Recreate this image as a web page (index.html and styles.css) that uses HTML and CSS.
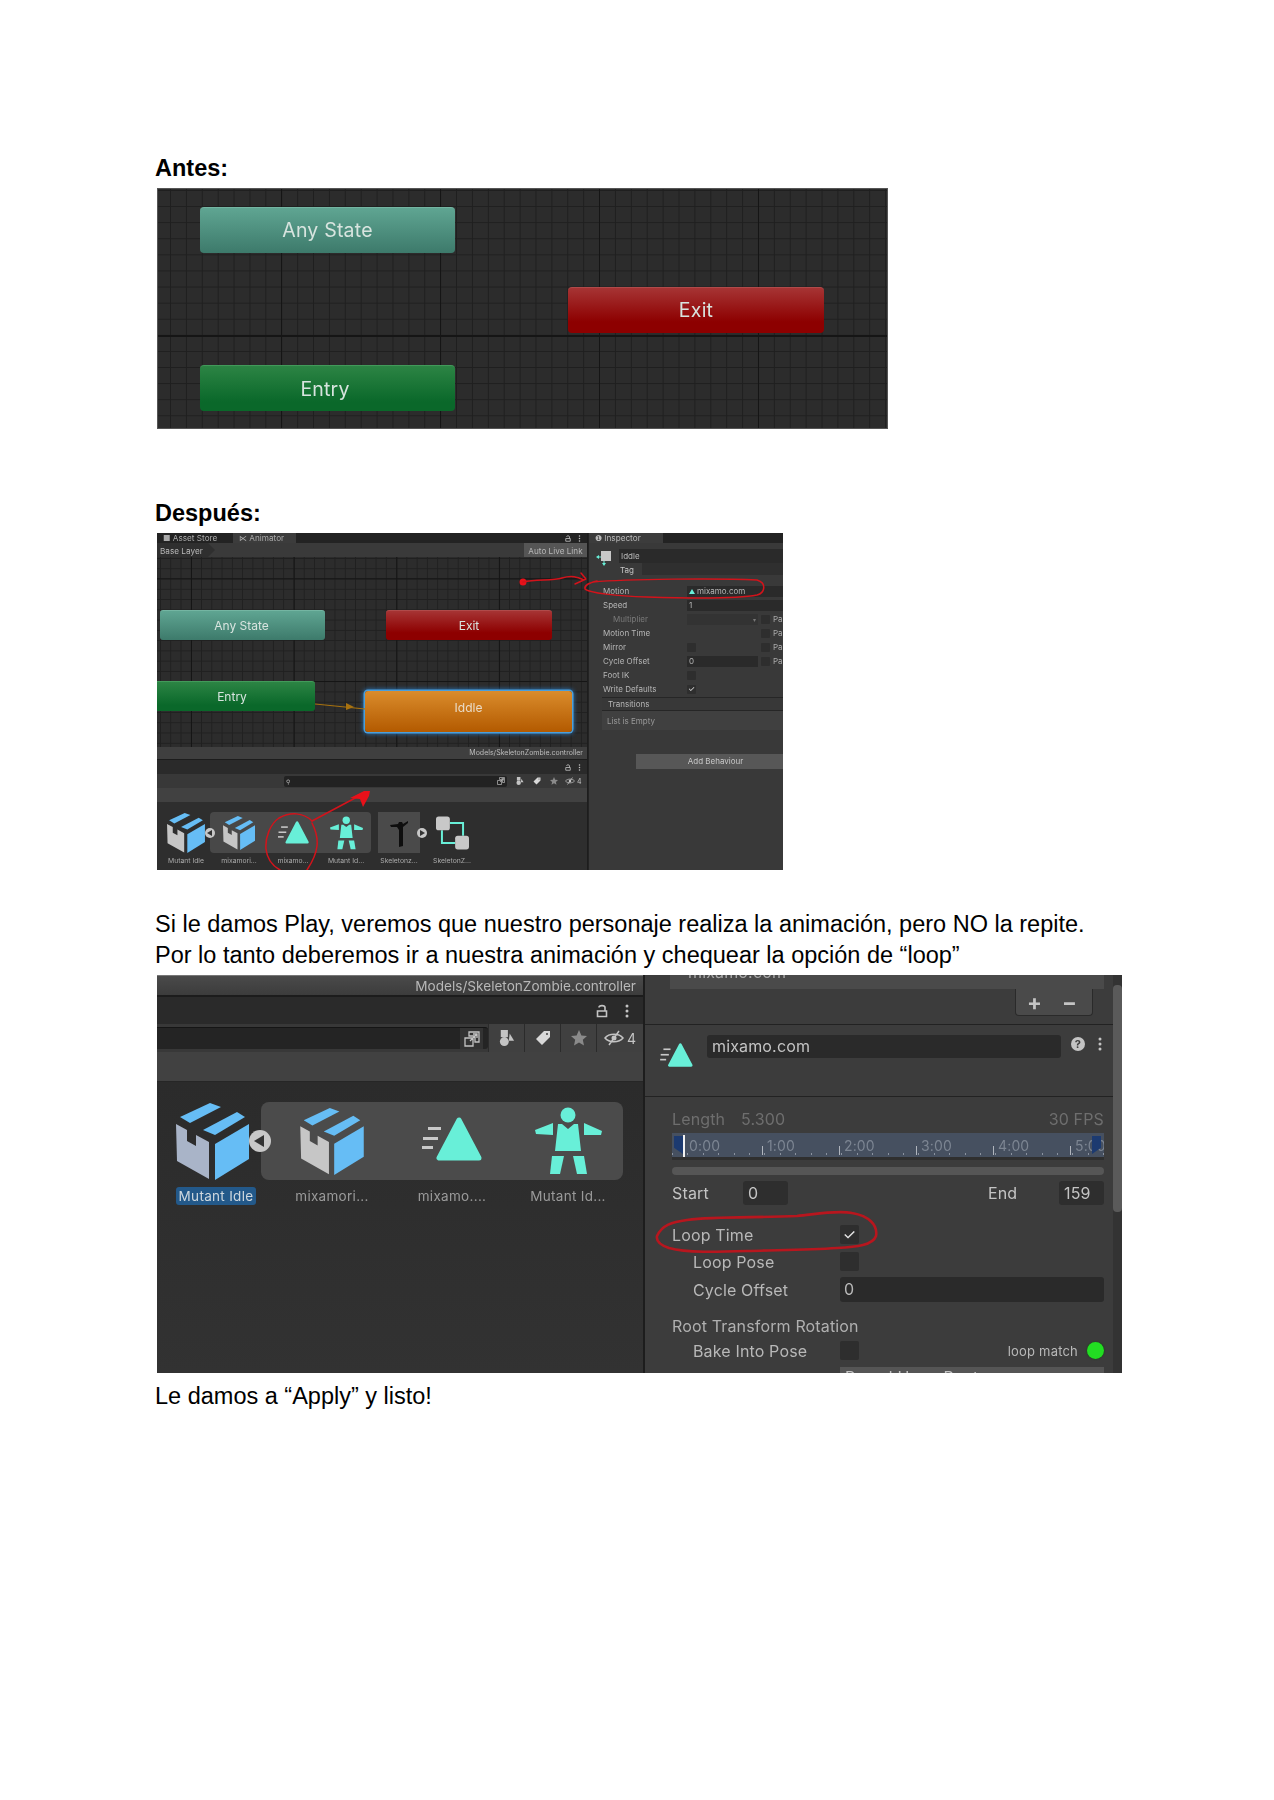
FILE: index.html
```html
<!DOCTYPE html>
<html lang="es">
<head>
    <meta charset="UTF-8">
    <meta name="viewport" content="width=device-width, initial-scale=1.0">
    <title>Animación en loop</title>
    <link rel="stylesheet" href="styles.css">
</head>
<body>
    <!-- iconos compartidos -->
    <svg class="icon-defs" width="0" height="0">
        <symbol id="i-box" viewBox="0 0 73 77">
            <polygon fill="#66bdf5" points="4,14 34,0 45,4 14,20"/>
            <polygon fill="#66bdf5" points="27,27 61,9 69,14 39,32"/>
            <polygon fill="var(--box-side, #c6c6c6)" points="0,21 11,27 11,38 20,43 20,32 33,39 33,76 1,58"/>
            <polygon fill="#66bdf5" points="39,41 73,21 73,56 39,77"/>
        </symbol>
        <symbol id="i-clip" viewBox="0 0 60 44">
            <rect fill="#c8c8c8" x="6" y="10" width="13" height="3"/>
            <rect fill="#c8c8c8" x="1" y="20" width="15" height="3"/>
            <rect fill="#c8c8c8" x="0" y="29" width="11" height="3"/>
            <polygon fill="#68efd8" stroke="#68efd8" stroke-width="5" stroke-linejoin="round" points="37,3 17,41 57,41"/>
        </symbol>
        <symbol id="i-avatar" viewBox="0 0 67 68">
            <g fill="#68efd8">
                <circle cx="33" cy="8" r="7.5"/>
                <polygon points="23,17 27,17 33,22 39,17 43,17 46,44 20,44"/>
                <polygon points="0,23 18,16 18,28 1,27"/>
                <polygon points="49,16 67,24 66,28 49,28"/>
                <polygon points="17,49 29,49 25,67 15,67"/>
                <polygon points="38,49 49,49 52,67 42,67"/>
            </g>
        </symbol>
        <symbol id="i-controller" viewBox="0 0 100 100">
            <path fill="none" stroke="#68efd8" stroke-width="6" d="M42 20H82V58M58 80H18V42"/>
            <rect fill="#c8c8c8" x="0" y="0" width="42" height="42" rx="8"/>
            <rect fill="#c8c8c8" x="58" y="58" width="42" height="42" rx="8"/>
        </symbol>
        <symbol id="i-lock" viewBox="0 0 12 14">
            <path fill="none" stroke="#c4c4c4" stroke-width="1.6" d="M9 7V3.5C9 1 3 1 3 3.5M1.5 7H10.5V12.5H1.5Z"/>
        </symbol>
        <symbol id="i-kebab" viewBox="0 0 4 14">
            <g fill="#c4c4c4"><circle cx="2" cy="2" r="1.5"/><circle cx="2" cy="7" r="1.5"/><circle cx="2" cy="12" r="1.5"/></g>
        </symbol>
        <symbol id="i-link" viewBox="0 0 16 16">
            <path fill="none" stroke="#c4c4c4" stroke-width="1.3" d="M5 1H15V11H11V5H5ZM1 7H9V15H1ZM6 10L13 3M9 3H13V7"/>
        </symbol>
        <symbol id="i-shapes" viewBox="0 0 16 18">
            <rect fill="#c4c4c4" x="1" y="0" width="8" height="8"/>
            <circle fill="#c4c4c4" cx="5" cy="13" r="5"/>
            <polygon fill="#c4c4c4" points="11,4 16,12 10,12"/>
        </symbol>
        <symbol id="i-tag" viewBox="0 0 16 16">
            <path fill="#d8d8d8" d="M9 1H15V7L7 15L1 9ZM12 3A1 1 0 1 0 12 5A1 1 0 1 0 12 3Z" fill-rule="evenodd"/>
        </symbol>
        <symbol id="i-star" viewBox="0 0 16 16">
            <polygon fill="#8a8a8a" points="8,0 10.4,5.4 16,6 11.8,9.8 13,15.5 8,12.6 3,15.5 4.2,9.8 0,6 5.6,5.4"/>
        </symbol>
        <symbol id="i-eye" viewBox="0 0 20 16">
            <path fill="none" stroke="#c4c4c4" stroke-width="1.5" d="M1 8C5 3 15 3 19 8C15 13 5 13 1 8ZM15 1L5 15"/>
            <circle fill="#c4c4c4" cx="10" cy="8" r="2.5"/>
        </symbol>
    </svg>

    <main class="doc">
        <h2 class="doc-title">Antes:</h2>
        <div class="shot shot-before graph graph-large">
            <div class="node node-any">Any State</div>
            <div class="node node-exit">Exit</div>
            <div class="node node-entry">Entry</div>
        </div>

        <h2 class="doc-title title-after">Después:</h2>
        <div class="shot shot-after">
            <div class="animator">
                <div class="tabs">
                    <span class="tab tab-dim">&#9632; Asset Store</span>
                    <span class="tab tab-active">&#8905; Animator</span>
                    <svg class="lock-sm"><use href="#i-lock"/></svg>
                    <svg class="kebab-sm"><use href="#i-kebab"/></svg>
                </div>
                <div class="crumbs">
                    <span class="crumb">Base Layer</span>
                    <span class="live-link">Auto Live Link</span>
                </div>
                <div class="graph graph-small">
                    <div class="node node-small n2-any">Any State</div>
                    <div class="node node-small n2-exit">Exit</div>
                    <div class="node node-small n2-entry">Entry</div>
                    <div class="node node-small n2-iddle">Iddle</div>
                    <svg class="transition" width="60" height="12" viewBox="0 0 60 12">
                        <path d="M0 3L50 8" stroke="#a8720f" stroke-width="1.2"/>
                        <polygon fill="#a8720f" points="31,2 39,6 31,9"/>
                    </svg>
                </div>
                <div class="path-bar">Models/SkeletonZombie.controller</div>
                <div class="lock-bar">
                    <svg class="lock-sm"><use href="#i-lock"/></svg>
                    <svg class="kebab-sm"><use href="#i-kebab"/></svg>
                </div>
                <div class="search-bar">
                    <div class="search-field"><span class="search-glass">&#9906;</span><svg class="tool-sm"><use href="#i-link"/></svg></div>
                    <svg class="tool-sm"><use href="#i-shapes"/></svg>
                    <svg class="tool-sm"><use href="#i-tag"/></svg>
                    <svg class="tool-sm"><use href="#i-star"/></svg>
                    <svg class="tool-eye"><use href="#i-eye"/></svg>
                    <span class="tool-count">4</span>
                </div>
                <div class="grey-bar"></div>
                <div class="assets">
                    <div class="asset-group"></div>
                    <svg class="a-icon a-first" width="38" height="40"><use href="#i-box"/></svg>
                    <span class="fold-btn fold-left"></span>
                    <svg class="a-icon a-c2" width="32" height="34"><use href="#i-box"/></svg>
                    <svg class="a-icon a-c3" width="31" height="23"><use href="#i-clip"/></svg>
                    <svg class="a-icon a-c4" width="33" height="34"><use href="#i-avatar"/></svg>
                    <div class="a-thumb a-c5">
                        <svg width="20" height="30" viewBox="0 0 20 30">
                            <path fill="#0e0e0e" d="M1 7L9 6L10 4L13 4L14 6L19 3L19 5L14 9L14 28L10 29L10 12L8 9L2 9Z"/>
                        </svg>
                    </div>
                    <span class="fold-btn fold-right"></span>
                    <svg class="a-icon a-c6" width="33" height="34"><use href="#i-controller"/></svg>
                    <span class="a-label a-first">Mutant Idle</span>
                    <span class="a-label a-c2">mixamori...</span>
                    <span class="a-label a-c3">mixamo...</span>
                    <span class="a-label a-c4">Mutant Id...</span>
                    <span class="a-label a-c5">Skeletonz...</span>
                    <span class="a-label a-c6">SkeletonZ...</span>
                </div>
            </div>
            <div class="inspector">
                <div class="tabs">
                    <span class="tab tab-active tab-inspector">&#10102; Inspector</span>
                </div>
                <div class="ins-head">
                    <svg class="state-icon" width="16" height="15" viewBox="0 0 16 15">
                        <rect fill="#c8c8c8" x="5" y="0" width="10" height="10"/>
                        <path fill="#68efd8" d="M0 6L3 4V5.5H5V6.5H3V8ZM8 15L6 12H7.5V10H8.5V12H10Z"/>
                    </svg>
                    <div class="ins-names">
                        <div class="ins-name">Iddle</div>
                        <div class="ins-tag"><span>Tag</span><i></i></div>
                    </div>
                </div>
                <div class="ins-rows">
                    <div class="ins-row"><span>Motion</span><span class="field field-motion"><b class="tri"></b>mixamo.com</span></div>
                    <div class="ins-row"><span>Speed</span><span class="field field-wide">1</span></div>
                    <div class="ins-row"><span class="sub">Multiplier</span><span class="field field-mid field-drop">&#9662;</span><span class="check"></span><span class="pa">Pa</span></div>
                    <div class="ins-row"><span>Motion Time</span><span class="field-gap"></span><span class="check"></span><span class="pa">Pa</span></div>
                    <div class="ins-row"><span>Mirror</span><span class="field-gap"><span class="check"></span></span><span class="check"></span><span class="pa">Pa</span></div>
                    <div class="ins-row"><span>Cycle Offset</span><span class="field field-mid">0</span><span class="check"></span><span class="pa">Pa</span></div>
                    <div class="ins-row"><span>Foot IK</span><span class="field-gap"><span class="check"></span></span></div>
                    <div class="ins-row"><span>Write Defaults</span><span class="field-gap"><span class="check check-on">&#10003;</span></span></div>
                </div>
                <div class="transitions">
                    <div class="trans-head">Transitions</div>
                    <div class="trans-body">List is Empty</div>
                </div>
                <div class="add-behaviour">Add Behaviour</div>
            </div>
            <svg class="ink" viewBox="0 0 626 337">
                <circle class="ink-dot" cx="366" cy="49" r="3.5"/>
                <path class="ink-line" d="M366 49C380 46 395 48 405 45S420 44 427 47M418 51L429 46L424 40"/>
                <path class="ink-line" d="M436 49C470 46 560 45 600 47C610 50 608 60 600 62C580 66 523 65 490 64C460 63 432 60 428 56C427 52 432 50 440 48"/>
                <path class="ink-line" d="M155 288C146 279 133 279 122 285C113 291 108 305 109 316C110 326 116 333 123 337M155 290C158 296 161 305 160 313C159 322 154 331 150 337"/>
                <path class="ink-line" d="M155 288L200 264"/>
                <polygon class="ink-dot" points="193,265 207,258 213,258 212,263 206,274 203,266"/>
            </svg>
        </div>

        <p class="doc-text text-play">Si le damos Play, veremos que nuestro personaje realiza la animación, pero NO la repite.<br>Por lo tanto deberemos ir a nuestra animación y chequear la opción de “loop”</p>

        <div class="shot shot-clip">
            <div class="project">
                <div class="p-path">Models/SkeletonZombie.controller</div>
                <div class="p-lockbar">
                    <svg class="p-lock"><use href="#i-lock"/></svg>
                    <svg class="p-kebab"><use href="#i-kebab"/></svg>
                </div>
                <div class="p-search">
                    <div class="p-field"><span class="p-field-btn"><svg class="p-tool"><use href="#i-link"/></svg></span></div>
                    <span class="p-btn"><svg class="p-tool"><use href="#i-shapes"/></svg></span>
                    <span class="p-btn"><svg class="p-tool"><use href="#i-tag"/></svg></span>
                    <span class="p-btn"><svg class="p-tool"><use href="#i-star"/></svg></span>
                    <span class="p-btn p-btn-eye"><svg class="p-eye"><use href="#i-eye"/></svg>4</span>
                </div>
                <div class="p-grey"></div>
                <div class="p-assets">
                    <div class="p-group"></div>
                    <svg class="p-icon p-first p-selected" width="73" height="77"><use href="#i-box"/></svg>
                    <span class="p-fold"></span>
                    <svg class="p-icon p-c2" width="64" height="67"><use href="#i-box"/></svg>
                    <svg class="p-icon p-c3" width="60" height="44"><use href="#i-clip"/></svg>
                    <svg class="p-icon p-c4" width="67" height="68"><use href="#i-avatar"/></svg>
                    <span class="p-label p-first p-label-on">Mutant Idle</span>
                    <span class="p-label p-c2">mixamori...</span>
                    <span class="p-label p-c3">mixamo....</span>
                    <span class="p-label p-c4">Mutant Id...</span>
                </div>
            </div>
            <div class="clip-panel">
                <div class="clip-body">
                    <div class="clip-list"><span>mixamo.com</span></div>
                    <div class="clip-plus"><span>+</span><span>&minus;</span></div>
                    <div class="clip-head">
                        <svg class="clip-icon" width="33" height="24"><use href="#i-clip"/></svg>
                        <div class="clip-name">mixamo.com</div>
                        <span class="clip-help">?</span>
                        <svg class="clip-kebab"><use href="#i-kebab"/></svg>
                    </div>
                    <div class="clip-form">
                        <div class="len-row"><span class="len-label">Length</span><span>5.300</span><span class="len-fps">30 FPS</span></div>
                        <div class="timeline">
                            <span class="tl-flag"></span>
                            <span class="tl-head"></span>
                            <span class="tl-cell tl-cell-first">0:00</span>
                            <span class="tl-cell">1:00</span>
                            <span class="tl-cell">2:00</span>
                            <span class="tl-cell">3:00</span>
                            <span class="tl-cell">4:00</span>
                            <span class="tl-cell">5:00</span>
                            <span class="tl-flag tl-flag-end"></span>
                        </div>
                        <div class="tl-scroll"></div>
                        <div class="range-row">
                            <span class="range-label">Start</span>
                            <span class="range-field">0</span>
                            <span class="range-end">End</span>
                            <span class="range-field">159</span>
                        </div>
                        <div class="opt-row opt-loop"><span>Loop Time</span><span class="opt-check">&#10003;</span></div>
                        <div class="opt-row opt-pose"><span class="opt-sub">Loop Pose</span><span class="opt-check"></span></div>
                        <div class="opt-row opt-cycle"><span class="opt-sub">Cycle Offset</span><span class="opt-field">0</span></div>
                        <div class="opt-title">Root Transform Rotation</div>
                        <div class="opt-row opt-bake">
                            <span class="opt-sub">Bake Into Pose</span><span class="opt-check"></span>
                            <span class="opt-match">loop match</span><span class="opt-led"></span>
                        </div>
                        <div class="opt-clipped"><span>Based Upon Root</span></div>
                    </div>
                </div>
                <div class="clip-scroll"><span></span></div>
            </div>
            <svg class="ink" viewBox="0 0 965 398">
                <path class="ink-line ink-bold" d="M500 261C505 250 515 247 530 245C560 241 600 243 640 241C660 239 680 235 695 238C712 241 721 250 719 261C716 270 700 272 680 273C650 275 620 275 590 276C560 277 530 278 512 273C503 270 499 266 500 261Z"/>
            </svg>
        </div>

        <p class="doc-text text-end">Le damos a “Apply” y listo!</p>
    </main>
</body>
</html>
```

FILE: styles.css
```css
body {
    margin: 0;
    background-color: #fff;
    color: #000;
    font-family: 'Liberation Sans', Arial, sans-serif;
}

.icon-defs {
    position: absolute;
}

.doc {
    padding: 153px 0 380px 155px;
}

.doc-title {
    margin: 0 0 4px;
    font-size: 23.5px;
    line-height: 31px;
    font-weight: bold;
}

.title-after {
    margin-top: 69px;
}

.doc-text {
    margin: 0;
    font-size: 23.5px;
    line-height: 31px;
}

.text-play {
    margin-top: 39px;
    margin-bottom: 4px;
}

.text-end {
    margin-top: 8px;
}

/* capturas */
.shot {
    position: relative;
    margin-left: 2px;
    overflow: hidden;
    font-family: Inter, 'Liberation Sans', sans-serif;
    filter: blur(0.4px);
}

.shot-before {
    width: 731px;
    height: 241px;
}

.shot-after {
    display: grid;
    grid-template-columns: 431px 195px;
    width: 626px;
    height: 337px;
    background-color: #383838;
    color: #c4c4c4;
    font-size: 8px;
}

.shot-clip {
    display: grid;
    grid-template-columns: 486px 479px;
    width: 965px;
    height: 398px;
    background-color: #1d1d1d;
    color: #c4c4c4;
}

.graph {
    position: relative;
    background-color: #2c2c2c;
}

.graph-large {
    background-image:
        linear-gradient(90deg, #151515 1px, transparent 1px),
        linear-gradient(#151515 2px, transparent 2px),
        linear-gradient(90deg, #1f1f1f 1px, transparent 1px),
        linear-gradient(#1f1f1f 1px, transparent 1px);
    background-size: 159px 100%, 100% 161px, 15.9px 100%, 100% 16.1px;
    background-position: 123px 0, 0 146px, 12px 0, 0 1px;
    border: 1px solid #555;
    box-sizing: border-box;
}

.graph-small {
    flex: none;
    height: 190px;
    background-image:
        linear-gradient(90deg, #151515 1px, transparent 1px),
        linear-gradient(#151515 1px, transparent 1px),
        linear-gradient(90deg, #202020 1px, transparent 1px),
        linear-gradient(#202020 1px, transparent 1px);
    background-size: 102.7px 100%, 100% 102.7px, 10.27px 100%, 100% 10.27px;
    background-position: 34px 0, 0 124px, 3px 0, 0 1px;
}

.node {
    position: absolute;
    display: flex;
    align-items: center;
    justify-content: center;
    box-sizing: border-box;
    width: 255px;
    height: 46px;
    border-radius: 4px;
    font-size: 19.5px;
    letter-spacing: 0.2px;
    color: #d8e4df;
}

.node-any,
.n2-any {
    background: linear-gradient(#5fa592, #3d7a6b);
    border-top: 1px solid #74b5a2;
}

.node-exit,
.n2-exit {
    background: linear-gradient(#a63434, #8d0000 75%);
    border-top: 1px solid #b04a4a;
}

.node-entry,
.n2-entry {
    background: linear-gradient(#2c8444, #0a682a 80%);
    border-top: 1px solid #429a5a;
}

.node-any {
    left: 42px;
    top: 18px;
    padding-bottom: 2px;
}

.node-exit {
    left: 410px;
    top: 98px;
    width: 256px;
    padding-bottom: 2px;
}

.node-entry {
    left: 42px;
    top: 176px;
    padding-right: 5px;
}

.node-small {
    font-size: 12px;
    letter-spacing: 0;
    height: 30px;
    border-radius: 3px;
}

.n2-any {
    left: 3px;
    top: 53px;
    width: 165px;
    padding-right: 2px;
}

.n2-exit {
    left: 229px;
    top: 53px;
    width: 166px;
}

.n2-entry {
    left: 0;
    top: 124px;
    width: 158px;
    padding: 0 8px 0 0;
    border-radius: 0 3px 3px 0;
}

.n2-iddle {
    left: 208px;
    top: 134px;
    width: 207px;
    height: 41px;
    padding-bottom: 8px;
    background: linear-gradient(#da8c2c, #b35a00);
    box-shadow: 0 0 0 1.5px #4b9fdc, 0 0 4px 2px #2a6ca8;
    color: #eadcc8;
}

.transition {
    position: absolute;
    left: 158px;
    top: 144px;
}

/* animator */
.animator {
    display: flex;
    flex-direction: column;
    height: 337px;
    border-right: 1px solid #1d1d1d;
    box-sizing: border-box;
}

.tabs {
    display: flex;
    align-items: center;
    flex: none;
    height: 10px;
    background-color: #232323;
    font-size: 8.2px;
    overflow: hidden;
}

.tab {
    display: flex;
    align-items: center;
    height: 100%;
    padding-left: 6px;
    box-sizing: border-box;
    white-space: nowrap;
}

.tab-dim {
    width: 76px;
    color: #aaa;
}

.tab-active {
    width: 63px;
    background-color: #3c3c3c;
    color: #aaa;
}

.tab-inspector {
    width: 74px;
    padding-left: 6px;
    color: #bbb;
}

.lock-sm {
    width: 6px;
    height: 7px;
    margin-left: auto;
}

.kebab-sm {
    width: 3px;
    height: 7px;
    margin: 0 6px 0 7px;
}

.crumbs {
    display: flex;
    justify-content: space-between;
    flex: none;
    height: 14px;
    line-height: 16px;
    background-color: #3a3a3a;
    color: #b8b8b8;
    font-size: 8.2px;
}

.crumb {
    width: 55px;
    padding-left: 3px;
    background-color: #2f2f2f;
    clip-path: polygon(0 0, 88% 0, 100% 50%, 88% 100%, 0 100%);
}

.live-link {
    width: 63px;
    text-align: center;
    background-color: #555;
}

.path-bar {
    flex: none;
    height: 12px;
    padding-right: 4px;
    line-height: 12px;
    text-align: right;
    background-color: #3f3f3f;
    font-size: 7px;
    color: #bdbdbd;
}

.lock-bar {
    display: flex;
    align-items: center;
    flex: none;
    height: 15px;
    background-color: #2a2a2a;
    border-top: 1px solid #1c1c1c;
    box-sizing: border-box;
}

.search-bar {
    display: flex;
    align-items: center;
    flex: none;
    height: 14px;
    padding-left: 127px;
    background-color: #383838;
}

.search-field {
    display: flex;
    align-items: center;
    justify-content: space-between;
    width: 223px;
    height: 11px;
    padding: 0 2px;
    box-sizing: border-box;
    background-color: #222;
    border-radius: 2px;
}

.search-glass {
    font-size: 6px;
    color: #bbb;
}

.tool-sm {
    flex: none;
    width: 8px;
    height: 8px;
    margin-left: 9px;
}

.tool-eye {
    width: 10px;
    height: 8px;
    margin-left: 7px;
}

.tool-count {
    margin-left: 2px;
    font-size: 7px;
}

.grey-bar {
    flex: none;
    height: 14px;
    background-color: #414141;
}

.assets {
    display: grid;
    grid-template-columns: 53px 58px 50px 56px 50px 56px;
    grid-template-rows: 41px 1fr;
    flex: 1;
    padding-top: 10px;
    row-gap: 2px;
    background-color: #2e2e2e;
    overflow: hidden;
}

.asset-group {
    grid-column: 2 / 5;
    grid-row: 1;
    margin-right: 3px;
    background-color: #484848;
    border-radius: 4px;
}

.a-icon {
    grid-row: 1;
    align-self: center;
    justify-self: center;
}

.a-first {
    grid-column: 1;
    justify-self: center;
    margin-left: 5px;
}

.a-c2 { grid-column: 2; }
.a-c3 { grid-column: 3; }
.a-c4 { grid-column: 4; }
.a-c5 { grid-column: 5; }
.a-c6 { grid-column: 6; }

.a-thumb {
    display: flex;
    align-items: center;
    justify-content: center;
    grid-row: 1;
    justify-self: center;
    width: 42px;
    background-color: #4a4a4a;
}

.fold-btn {
    grid-row: 1;
    align-self: center;
    position: relative;
    width: 10px;
    height: 10px;
    border-radius: 50%;
    background-color: #c8c8c8;
    z-index: 1;
}

.fold-left {
    grid-column: 1;
    justify-self: end;
    margin-right: -5px;
}

.fold-right {
    grid-column: 5;
    justify-self: end;
    margin-right: -3px;
}

.fold-left::after,
.fold-right::after {
    content: "";
    position: absolute;
    top: 2px;
    border-top: 3px solid transparent;
    border-bottom: 3px solid transparent;
}

.fold-left::after {
    left: 2px;
    border-right: 5px solid #333;
}

.fold-right::after {
    left: 3px;
    border-left: 5px solid #333;
}

.a-label {
    grid-row: 2;
    justify-self: center;
    font-size: 6.8px;
    line-height: 12px;
    color: #aaa;
    white-space: nowrap;
}

/* inspector */
.inspector {
    display: flex;
    flex-direction: column;
    background-color: #393939;
    box-shadow: inset 1px 0 0 #232323;
    padding-left: 1px;
    box-sizing: border-box;
    overflow: hidden;
}

.ins-head {
    display: flex;
    flex: none;
    gap: 7px;
    height: 41px;
    padding: 6px 0 0 7px;
    box-sizing: border-box;
}

.state-icon {
    flex: none;
    margin-top: 2px;
}

.ins-names {
    flex: 1;
}

.ins-name {
    height: 14px;
    padding-left: 2px;
    line-height: 14px;
    background-color: #2a2a2a;
    color: #bbb;
}

.ins-tag {
    display: flex;
    height: 12px;
    margin-top: 0;
    line-height: 14px;
}

.ins-tag span {
    width: 22px;
    padding-left: 1px;
}

.ins-tag i {
    flex: 1;
    background-color: #2f2f2f;
}

.ins-rows {
    flex: none;
    padding: 0 0 0 14px;
    margin-top: 0;
}

.ins-row {
    display: flex;
    align-items: center;
    height: 14px;
    white-space: nowrap;
    color: #b6b6b6;
}

.ins-row > span:first-child {
    flex: none;
    width: 84px;
}

.ins-row > .sub {
    padding-left: 10px;
    box-sizing: border-box;
    color: #7a7a7a;
}

.field {
    display: flex;
    align-items: center;
    height: 11px;
    padding-left: 2px;
    box-sizing: border-box;
    background-color: #2a2a2a;
}

.field-motion,
.field-wide {
    flex: 1;
}

.field-mid {
    width: 71px;
    margin-right: 3px;
}

.field-drop {
    justify-content: flex-end;
    padding-right: 2px;
    font-size: 6px;
    color: #777;
    background-color: #333;
}

.field-gap {
    width: 74px;
    flex: none;
}

.tri {
    width: 0;
    height: 0;
    margin-right: 2px;
    border-left: 3px solid transparent;
    border-right: 3px solid transparent;
    border-bottom: 5px solid #68efd8;
}

.check {
    display: flex;
    align-items: center;
    justify-content: center;
    width: 9px;
    height: 9px;
    background-color: #2e2e2e;
    border-radius: 1px;
    color: #ddd;
    font-size: 8px;
}

.pa {
    margin-left: 3px;
    color: #aaa;
}

.transitions {
    flex: none;
    margin: 1px 0 0 13px;
    background-color: #404040;
    border-top: 1px solid #262626;
}

.trans-head {
    height: 12px;
    padding-left: 6px;
    line-height: 12px;
    background-color: #383838;
    border-bottom: 1px solid #262626;
    color: #b6b6b6;
}

.trans-body {
    height: 19px;
    padding-left: 5px;
    line-height: 21px;
    color: #9a9a9a;
}

.add-behaviour {
    flex: none;
    height: 15px;
    margin: 24px 0 0 47px;
    padding-left: 12px;
    line-height: 15px;
    text-align: center;
    background-color: #575757;
    color: #c8c8c8;
}

/* anotaciones en rojo */
.ink {
    position: absolute;
    left: 0;
    top: 0;
    width: 100%;
    height: 100%;
    pointer-events: none;
}

.ink-line {
    fill: none;
    stroke: #d3131b;
    stroke-width: 1.5;
    stroke-linejoin: round;
    stroke-linecap: round;
}

.ink-bold {
    stroke: #b8161e;
    stroke-width: 2.6;
}

.ink-dot {
    fill: #e8111a;
}

/* panel project grande */
.project {
    display: flex;
    flex-direction: column;
    height: 398px;
}

.p-path {
    flex: none;
    height: 20px;
    padding-right: 7px;
    line-height: 20px;
    text-align: right;
    background: linear-gradient(#4a4a4a, #3c3c3c);
    border-top: 1px solid #777;
    box-sizing: border-box;
    font-size: 13.6px;
    color: #b8b8b8;
}

.p-lockbar {
    display: flex;
    align-items: center;
    justify-content: flex-end;
    flex: none;
    height: 29px;
    margin-top: 0;
    padding-right: 14px;
    gap: 17px;
    box-sizing: border-box;
    background-color: #2a2a2a;
    border-top: 2px solid #1c1c1c;
}

.p-lock {
    width: 12px;
    height: 14px;
}

.p-kebab {
    width: 4px;
    height: 14px;
}

.p-search {
    display: flex;
    align-items: center;
    flex: none;
    height: 28px;
    background-color: #383838;
}

.p-field {
    display: flex;
    justify-content: flex-end;
    width: 331px;
    height: 22px;
    padding-right: 5px;
    box-sizing: border-box;
    background-color: #242424;
    border-top: 1px solid #151515;
    border-radius: 0 3px 3px 0;
}

.p-field-btn {
    display: flex;
    align-items: center;
    justify-content: center;
    width: 23px;
    background-color: #333;
}

.p-btn {
    display: flex;
    align-items: center;
    justify-content: center;
    width: 36px;
    height: 100%;
    box-sizing: border-box;
    border-left: 1px solid #2b2b2b;
    background-color: #404040;
}

.p-btn-eye {
    flex: 1;
    gap: 3px;
    font-size: 14px;
}

.p-tool {
    width: 16px;
    height: 16px;
}

.p-eye {
    width: 20px;
    height: 16px;
}

.p-grey {
    flex: none;
    height: 29px;
    background-color: #414141;
}

.p-assets {
    display: grid;
    grid-template-columns: 104px 142px 98px 134px;
    grid-template-rows: 78px 1fr;
    flex: 1;
    padding-top: 20px;
    row-gap: 7px;
    background: linear-gradient(#2b2b2b, #323232);
    border-top: 1px solid #262626;
    box-sizing: border-box;
}

.p-group {
    grid-column: 2 / 5;
    grid-row: 1;
    margin-right: 12px;
    background-color: #4b4b4b;
    border-radius: 8px;
}

.p-icon {
    grid-row: 1;
    align-self: center;
    justify-self: center;
}

.p-first {
    grid-column: 1;
}

.p-icon.p-first {
    margin-left: 6px;
}

.p-selected {
    --box-side: #a9b4c8;
}

.p-c2 { grid-column: 2; }
.p-c3 { grid-column: 3; }
.p-c4 { grid-column: 4; }

.p-icon.p-c3 {
    margin-top: -4px;
}

.p-fold {
    position: relative;
    grid-column: 1;
    grid-row: 1;
    align-self: center;
    justify-self: end;
    width: 22px;
    height: 22px;
    margin-right: -10px;
    border-radius: 50%;
    background-color: #c8c8c8;
    z-index: 1;
}

.p-fold::after {
    content: "";
    position: absolute;
    left: 5px;
    top: 5px;
    border-top: 6px solid transparent;
    border-bottom: 6px solid transparent;
    border-right: 10px solid #333;
}

.p-label {
    grid-row: 2;
    justify-self: center;
    align-self: start;
    height: 18px;
    line-height: 18px;
    font-size: 13.5px;
    letter-spacing: 0.3px;
    color: #9a9a9a;
    white-space: nowrap;
}

.p-label-on {
    margin-left: 14px;
    padding: 0 3px;
    border-radius: 3px;
    background-color: #23598a;
    color: #cfd8df;
}

/* panel del clip */
.clip-panel {
    display: grid;
    grid-template-columns: 1fr 9px;
    margin-left: 2px;
    background-color: #3c3c3c;
    font-size: 16px;
    letter-spacing: 0.15px;
}

.clip-body {
    display: flex;
    flex-direction: column;
    min-width: 0;
}

.clip-list {
    flex: none;
    height: 14px;
    margin: 0 9px 0 25px;
    padding-left: 18px;
    background-color: #4a4a4a;
    overflow: hidden;
}

.clip-list span {
    display: block;
    margin-top: -13px;
    line-height: 20px;
    color: #a8a8a8;
}

.clip-plus {
    display: flex;
    align-items: center;
    flex: none;
    gap: 20px;
    align-self: flex-end;
    width: 78px;
    height: 27px;
    margin-right: 20px;
    padding-left: 11px;
    box-sizing: border-box;
    background-color: #4a4a4a;
    border-radius: 0 0 4px 4px;
    border: 1px solid #2a2a2a;
    border-top: 0;
    font-size: 22px;
    font-weight: bold;
}

.clip-head {
    display: flex;
    align-items: flex-start;
    flex: none;
    height: 73px;
    margin-top: 8px;
    padding: 10px 9px 0 15px;
    box-sizing: border-box;
    border-top: 1px solid #222;
    border-bottom: 1px solid #222;
}

.clip-icon {
    flex: none;
    margin-top: 8px;
}

.clip-name {
    width: 354px;
    height: 23px;
    margin-left: 14px;
    padding-left: 5px;
    box-sizing: border-box;
    line-height: 23px;
    background-color: #2a2a2a;
    border-radius: 3px;
    color: #c4c4c4;
}

.clip-help {
    width: 14px;
    height: 14px;
    margin: 2px 0 0 10px;
    line-height: 14px;
    text-align: center;
    border-radius: 50%;
    background-color: #c4c4c4;
    color: #3c3c3c;
    font-size: 11px;
    font-weight: bold;
}

.clip-kebab {
    width: 4px;
    height: 14px;
    margin: 2px 0 0 13px;
}

.clip-form {
    display: flex;
    flex-direction: column;
    flex: 1;
    padding: 0 9px 0 27px;
    overflow: hidden;
}

.len-row {
    display: flex;
    flex: none;
    height: 22px;
    margin-top: 11px;
    line-height: 22px;
    color: #6e6e6e;
}

.len-label {
    width: 69px;
}

.len-fps {
    margin-left: auto;
}

.timeline {
    position: relative;
    display: flex;
    flex: none;
    height: 27px;
    margin-top: 3px;
    padding-left: 13px;
    box-sizing: border-box;
    background-color: #465060;
    background-image: repeating-linear-gradient(90deg, #8b93a0 0 1px, transparent 1px 15.4px);
    background-size: 100% 2px;
    background-repeat: no-repeat;
    background-position: 0 20px;
    border-bottom: 3px solid #2f2f2f;
    overflow: hidden;
    font-size: 14px;
    color: #7c8592;
}

.tl-cell {
    flex: none;
    width: 77px;
    height: 22px;
    padding-left: 4px;
    box-sizing: border-box;
    line-height: 26px;
    border-left: 1px solid #b0b5bd;
    border-image: linear-gradient(transparent 60%, #b0b5bd 60%) 1;
}

.tl-cell-first {
    border-left: 0;
}

.tl-head {
    position: absolute;
    left: 11px;
    top: 2px;
    width: 2px;
    height: 22px;
    background-color: #f2f2f2;
}

.tl-flag {
    position: absolute;
    left: 2px;
    top: 3px;
    width: 9px;
    height: 18px;
    background-color: #1c3a70;
    clip-path: polygon(0 0, 100% 0, 100% 100%, 0 65%);
}

.tl-flag-end {
    left: auto;
    right: 3px;
    clip-path: polygon(0 0, 100% 0, 100% 65%, 0 100%);
}

.tl-scroll {
    flex: none;
    height: 8px;
    margin-top: 7px;
    background-color: #565656;
    border-radius: 4px;
}

.range-row {
    display: flex;
    align-items: center;
    flex: none;
    height: 24px;
    margin-top: 6px;
}

.range-label {
    width: 71px;
}

.range-end {
    margin: 0 0 0 auto;
    width: 71px;
}

.range-field {
    width: 45px;
    height: 24px;
    padding-left: 5px;
    box-sizing: border-box;
    line-height: 24px;
    background-color: #2e2e2e;
    border-radius: 3px;
}

.opt-row {
    display: flex;
    align-items: center;
    flex: none;
    height: 19px;
    color: #b8b8b8;
}

.opt-row > span:first-child {
    flex: none;
    width: 168px;
}

.opt-row > .opt-sub {
    padding-left: 21px;
    box-sizing: border-box;
}

.opt-loop {
    margin-top: 20px;
}

.opt-pose {
    margin-top: 8px;
}

.opt-cycle {
    height: 25px;
    margin-top: 6px;
}

.opt-bake {
    margin-top: 4px;
}

.opt-check {
    display: flex;
    align-items: center;
    justify-content: center;
    width: 19px;
    height: 19px;
    border-radius: 2px;
    background-color: #2e2e2e;
    font-size: 15px;
    color: #e8e8e8;
}

.opt-field {
    flex: 1;
    height: 25px;
    padding-left: 4px;
    line-height: 25px;
    background-color: #2a2a2a;
    border-radius: 3px;
}

.opt-title {
    flex: none;
    height: 22px;
    margin-top: 13px;
    line-height: 22px;
    color: #b0b0b0;
}

.opt-match {
    margin-left: auto;
    font-size: 13px;
    letter-spacing: 0.2px;
}

.opt-led {
    width: 17px;
    height: 17px;
    margin-left: 9px;
    border-radius: 50%;
    background-color: #22dd22;
    box-shadow: 0 0 2px #0a4a0a;
}

.opt-clipped {
    flex: none;
    height: 10px;
    margin: 7px 0 0 168px;
    padding-left: 5px;
    background-color: #555;
    overflow: hidden;
}

.opt-clipped span {
    display: block;
    line-height: 20px;
    white-space: nowrap;
}

.clip-scroll {
    background-color: #333;
}

.clip-scroll span {
    display: block;
    height: 227px;
    margin-top: 10px;
    background-color: #5a5a5a;
    border-radius: 4px;
}
```
